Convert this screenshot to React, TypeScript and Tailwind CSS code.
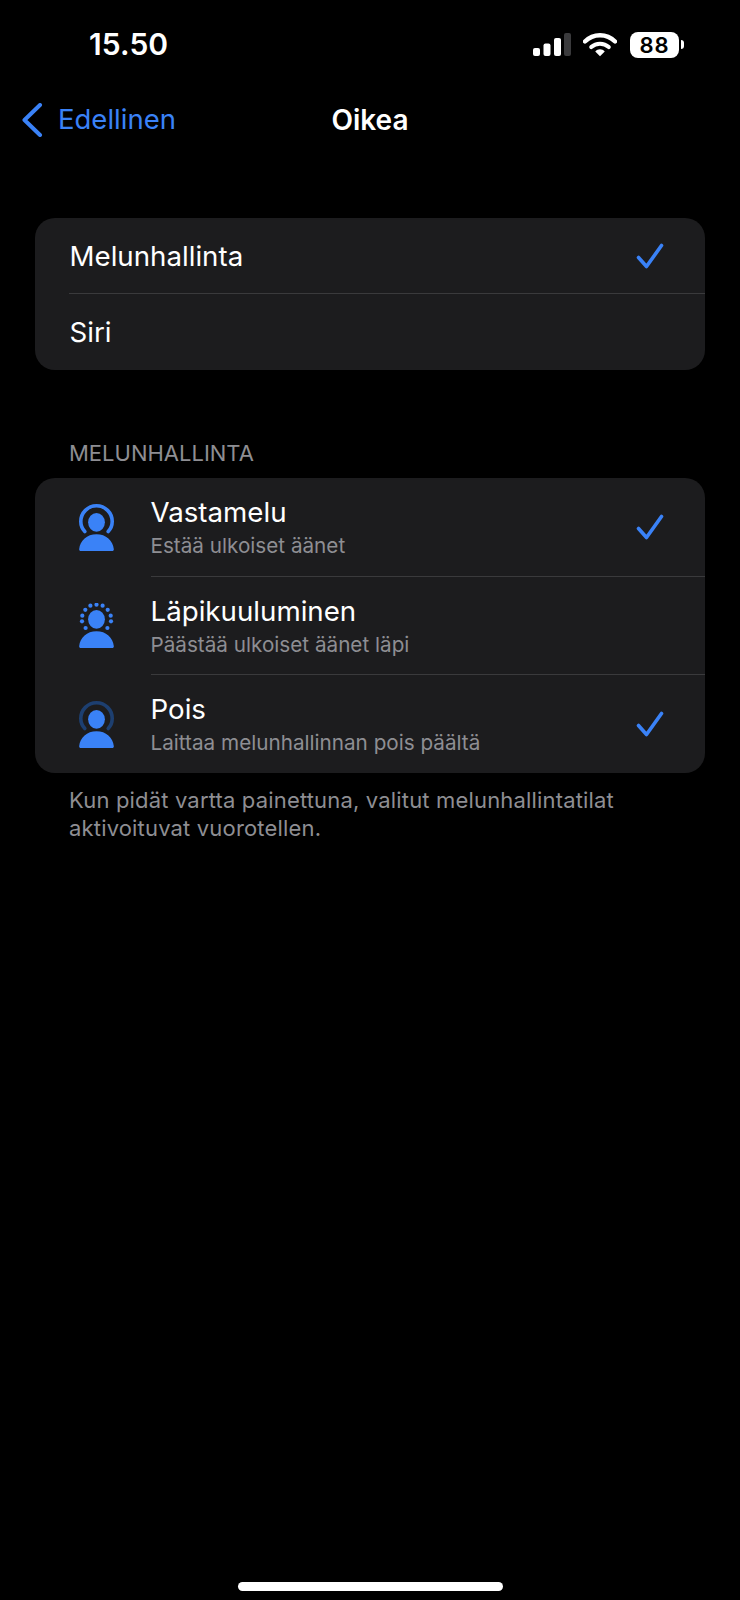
import { ReactNode } from 'react';

const BLUE = '#3a82f7';

function Check() {
  return (
    <svg width="30" height="28" viewBox="0 0 30 28" fill="none" className="shrink-0 mt-[2px]">
      <path d="M2.5 14.5L10.5 23.5L25.5 2.5" stroke={BLUE} strokeWidth="3.6" strokeLinecap="round" strokeLinejoin="round" />
    </svg>
  );
}

function Body() {
  return (
    <>
      <ellipse cx="17.5" cy="18.3" rx="8.4" ry="9.4" fill={BLUE} />
      <path d="M0.2 45C1 36.5 8 30.2 17.5 30.2C27 30.2 34 36.5 34.8 45C35 46.4 34.2 47 33 47H2C0.8 47 0 46.4 0.2 45Z" fill={BLUE} />
    </>
  );
}

function NoiseIcon({ kind }: { kind: 'on' | 'dots' | 'off' }) {
  const dots = [
    [17.5, 3.7], [11.4, 4.7], [23.6, 4.7], [6.3, 8.8], [28.7, 8.8], [3.3, 14.7], [31.7, 14.7],
    [3, 20.3], [32, 20.3], [6.6, 27], [28.4, 27],
  ];
  if (kind === 'dots') {
    return (
      <svg width="35" height="45" viewBox="0 2 35 45" fill="none" className="shrink-0">
        {dots.map(([x, y]) => (
          <circle key={`${x}-${y}`} cx={x} cy={y} r="2.1" fill={BLUE} />
        ))}
        <Body />
      </svg>
    );
  }
  return (
    <svg width="35" height="47" viewBox="0 0 35 47" fill="none" className="shrink-0">
      <path
        d="M5.8 27.5C3.2 24.8 1.8 21.3 1.8 17.5C1.8 8.8 8.8 1.8 17.5 1.8C26.2 1.8 33.2 8.8 33.2 17.5C33.2 21.3 31.8 24.8 29.2 27.5"
        stroke={kind === 'on' ? BLUE : '#1d3f70'}
        strokeWidth="3.6"
        strokeLinecap="round"
      />
      <Body />
    </svg>
  );
}

function Divider({ className }: { className: string }) {
  return <div className={`h-px bg-[#3a3a3c] ${className}`} />;
}

function StatusBar() {
  return (
    <div className="h-[88px] flex items-center justify-between pl-[89px] pr-[56px]">
      <span className="text-[30px] font-semibold leading-none text-white tracking-[0.1px] mb-[1px]">15.50</span>
      <div className="flex items-center mt-[1px]">
        <svg width="38" height="24" viewBox="0 0 38 24" className="mr-[12px]">
          <rect x="0" y="15" width="7" height="8" rx="2" fill="#fff" />
          <rect x="10.5" y="10.5" width="7" height="12.5" rx="2" fill="#fff" />
          <rect x="21" y="5" width="7" height="18" rx="2" fill="#fff" />
          <rect x="31" y="0" width="7" height="23" rx="2" fill="#3a3a3c" />
        </svg>
        <svg width="34" height="25" viewBox="0 0 35 25" fill="none" className="mr-[13px]">
          <path d="M2 9.5C10.5 0.8 24.5 0.8 33 9.5" stroke="#fff" strokeWidth="4.4" strokeLinecap="round" />
          <path d="M8.5 15.2C13.5 10.6 21.5 10.6 26.5 15.2" stroke="#fff" strokeWidth="4.2" strokeLinecap="round" />
          <path d="M12.6 19.6C15.2 16.6 19.8 16.6 22.4 19.6L17.5 24.6Z" fill="#fff" />
        </svg>
        <div className="w-[49px] h-[26px] rounded-[8px] bg-white flex items-center justify-center text-[22px] font-semibold leading-none text-black tracking-[1px]">
          88
        </div>
        <div className="w-[3px] h-[9px] ml-[2px] rounded-r-full bg-white" />
      </div>
    </div>
  );
}

function Row({ children, check }: { children: ReactNode; check?: boolean }) {
  return (
    <div className="flex items-center justify-between">
      {children}
      {check && <Check />}
    </div>
  );
}

const modes = [
  { kind: 'on' as const, title: 'Vastamelu', sub: 'Estää ulkoiset äänet', check: true, h: 'h-[98px]' },
  { kind: 'dots' as const, title: 'Läpikuuluminen', sub: 'Päästää ulkoiset äänet läpi', check: false, h: 'h-[97px]' },
  { kind: 'off' as const, title: 'Pois', sub: 'Laittaa melunhallinnan pois päältä', check: true, h: 'h-[98px]' },
];

export default function App() {
  return (
    <div className="w-[740px] h-[1600px] bg-black flex flex-col text-white overflow-hidden font-['Inter',sans-serif]">
      <StatusBar />

      <div className="h-[62px] flex items-center relative pt-[2px]">
        <div className="flex items-center pl-[21px] text-[27.5px] text-[#3a82f7]">
          <svg width="22" height="34" viewBox="0 0 22 34" fill="none" className="mr-[15px]">
            <path d="M19 2L3.5 17L19 32" stroke={BLUE} strokeWidth="4" strokeLinecap="round" strokeLinejoin="round" />
          </svg>
          Edellinen
        </div>
        <div className="absolute left-0 right-0 text-center text-[28px] font-semibold">Oikea</div>
      </div>

      <div className="mx-[35px] mt-[68px] rounded-[20px] bg-[#1c1c1e] text-[27.7px]">
        <div className="h-[75px] pl-[34.5px] pr-[39px]">
          <Row check>
            <span className="h-[75px] leading-[76px]">Melunhallinta</span>
          </Row>
        </div>
        <Divider className="ml-[34px]" />
        <div className="h-[76px] pl-[34.5px] leading-[76px]">Siri</div>
      </div>

      <div className="mt-[69px] ml-[69px] text-[22px] leading-[28px] text-[#8e8e93]">MELUNHALLINTA</div>

      <div className="mx-[35px] mt-[11px] rounded-[20px] bg-[#1c1c1e]">
        {modes.map((m, i) => (
          <div key={m.title}>
            {i > 0 && <Divider className="ml-[116px]" />}
            <div className={`${m.h} flex items-center pr-[39px]`}>
              <div className="w-[116px] pl-[44px]">
                <NoiseIcon kind={m.kind} />
              </div>
              <div className="flex-1 flex flex-col -ml-[0.5px]">
                <span className="text-[27.7px] leading-[37px]">{m.title}</span>
                <span className="text-[20.7px] leading-[29px] text-[#8e8e93]">{m.sub}</span>
              </div>
              {m.check && <Check />}
            </div>
          </div>
        ))}
      </div>

      <p className="mt-[13px] ml-[69px] mr-[60px] text-[22px] tracking-[0.17px] leading-[28px] text-[#8e8e93]">
        Kun pidät vartta painettuna, valitut melunhallintatilat aktivoituvat vuorotellen.
      </p>

      <div className="flex-1 flex items-end justify-center pb-[9px]">
        <div className="w-[265px] h-[9px] rounded-full bg-white" />
      </div>
    </div>
  );
}
